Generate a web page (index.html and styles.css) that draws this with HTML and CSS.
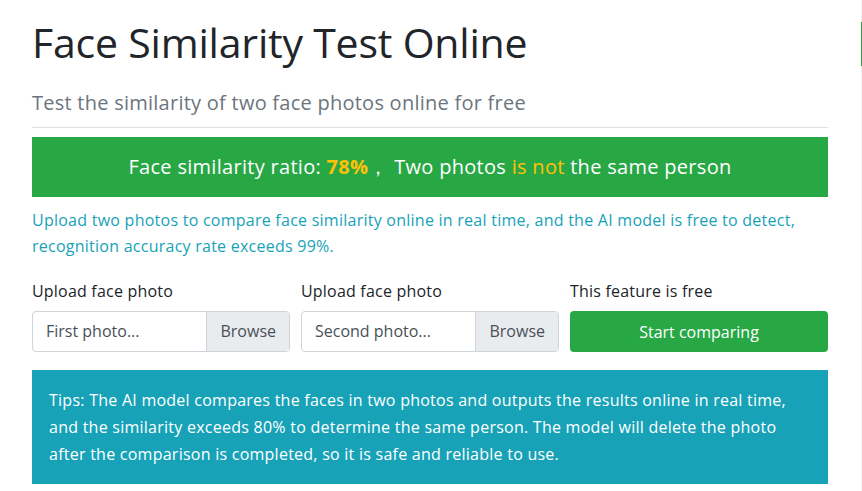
FILE: index.html
```html
<!DOCTYPE html>
<html lang="en">
<head>
  <meta charset="UTF-8" />
  <title>Face Similarity Test Online</title>
  <link rel="stylesheet" href="styles.css">
</head>
<body>
  <div class="page">
    <div class="main">
      <h1 class="title">Face Similarity Test Online</h1>
      <p class="subtitle">Test the similarity of two face photos online for free</p>
      <hr class="divider">

      <div class="result">
        Face similarity ratio: <strong class="ratio">78%</strong>，&nbsp;Two photos <span class="warn">is not</span> the same person
      </div>

      <p class="intro">Upload two photos to compare face similarity online in real time, and the AI model is free to detect, recognition accuracy rate exceeds 99%.</p>

      <form class="upload-row">
        <div class="field">
          <label>Upload face photo</label>
          <div class="file-box">
            <span class="file-name">First photo...</span>
            <span class="file-btn">Browse</span>
          </div>
        </div>
        <div class="field">
          <label>Upload face photo</label>
          <div class="file-box">
            <span class="file-name">Second photo...</span>
            <span class="file-btn">Browse</span>
          </div>
        </div>
        <div class="field">
          <label>This feature is free</label>
          <button type="button" class="compare-btn">Start comparing</button>
        </div>
      </form>

      <div class="tips">
        Tips: The AI model compares the faces in two photos and outputs the results online in real time, and the similarity exceeds 80% to determine the same person. The model will delete the photo after the comparison is completed, so it is safe and reliable to use.
      </div>
    </div>
    <div class="side">
      <div class="side-mark"></div>
    </div>
  </div>
</body>
</html>
```

FILE: styles.css
```css
body {
  margin: 0;
  padding: 0;
  font-family: 'Open Sans', 'Noto Sans', sans-serif;
  color: #212529;
  background: #fff;
}

.page {
  display: flex;
  min-height: 491px;
}

.main {
  width: 796px;
  padding: 0 33px 0 32px;
}

.side {
  width: 1px;
  background: #f3f3f3;
}

.side-mark {
  margin-top: 22px;
  height: 44px;
  background: #28a745;
}

.title {
  margin: 0;
  padding-top: 16px;
  font-size: 41px;
  font-weight: 400;
  line-height: 52px;
  letter-spacing: -0.2px;
  color: #212529;
}

.subtitle {
  margin: 21px 0 0;
  font-size: 20px;
  line-height: 28px;
  color: #6c757d;
  letter-spacing: 0.25px;
}

.divider {
  border: 0;
  border-top: 1px solid #dee2e6;
  margin: 10px 0 9px;
}

.result {
  background: #28a745;
  color: #fff;
  text-align: center;
  font-size: 20px;
  line-height: 28px;
  padding: 16px;
  letter-spacing: 0.3px;
}

.ratio {
  color: #ffc107;
  font-weight: bold;
}

.warn {
  color: #ffc107;
}

.intro {
  margin: 10px 0 0;
  color: #17a2b8;
  font-size: 16px;
  line-height: 26px;
  letter-spacing: 0.25px;
}

.upload-row {
  display: grid;
  grid-template-columns: repeat(3, 1fr);
  gap: 11px;
  margin-top: 20px;
}

.field label {
  display: block;
  font-size: 16px;
  line-height: 24px;
  margin-bottom: 8px;
  letter-spacing: 0.2px;
}

.file-box {
  display: flex;
  height: 41px;
  box-sizing: border-box;
  border: 1px solid #ced4da;
  border-radius: 4px;
  overflow: hidden;
  font-size: 16px;
}

.file-name {
  flex: 1;
  padding: 0 13px;
  line-height: 39px;
  color: #495057;
}

.file-btn {
  padding: 0 13px;
  line-height: 39px;
  background: #e9ecef;
  color: #495057;
  border-left: 1px solid #ced4da;
}

.compare-btn {
  display: block;
  width: 100%;
  height: 41px;
  border: 0;
  border-radius: 4px;
  background: #28a745;
  color: #fff;
  font-family: inherit;
  font-size: 16px;
  cursor: pointer;
}

.tips {
  margin-top: 18px;
  background: #17a2b8;
  color: #fff;
  font-size: 16px;
  line-height: 27px;
  padding: 17px 17px 16px;
  letter-spacing: 0.25px;
}
```
